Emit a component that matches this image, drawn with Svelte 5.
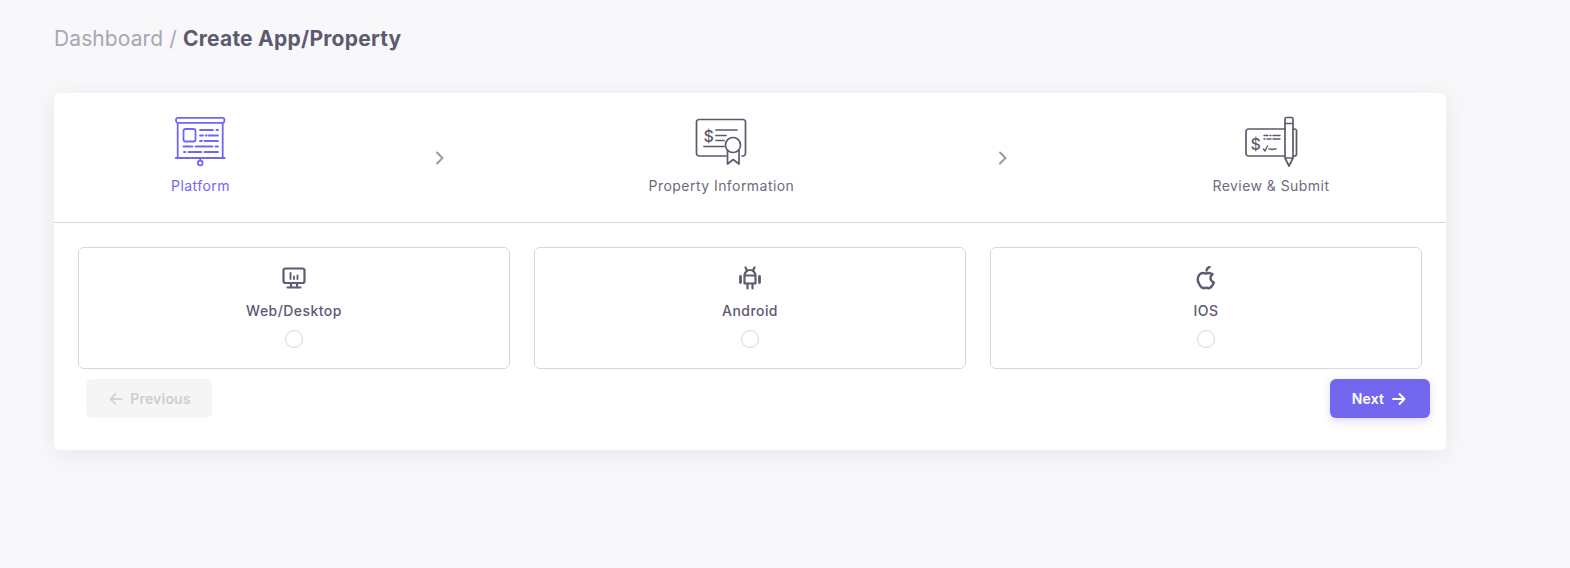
<script>
  const options = ['Web/Desktop', 'Android', 'IOS'];
</script>

<div class="page">
  <h1 class="crumb"><span class="muted">Dashboard /&nbsp;</span><strong>Create App/Property</strong></h1>

  <section class="card">
    <div class="steps">
      <div class="step active">
        <svg class="step-icon" viewBox="0 0 60 56" fill="none" stroke="currentColor" stroke-width="1.800" stroke-linecap="round">
          <rect x="5" y="5.800" width="48.400" height="5" rx="2"/>
          <path d="M6.700 11v35M51.700 11v35M4.700 46h49"/>
          <path d="M29.200 46v2.500"/>
          <circle cx="29.200" cy="51" r="2.400"/>
          <rect x="12.500" y="17" width="12" height="12.500" rx="2"/>
          <path d="M29 18h13M45.500 18h1.500M29 23.500h3M34.500 23.500h1M37.500 23.500h9.500M29 29h2M33.500 29h13.500M12.500 34.500h9M24.500 34.500h17M44.500 34.500h2.500M13 40h1.500M17.500 40h13M33.500 40h13.500"/>
        </svg>
        <span>Platform</span>
      </div>
      <svg class="chev" viewBox="0 0 16 16" fill="none" stroke="currentColor" stroke-width="2" stroke-linecap="round" stroke-linejoin="round"><path d="M5 2.500 10.500 8 5 13.500"/></svg>

      <div class="step">
        <svg class="step-icon" viewBox="0 0 60 56" fill="none" stroke="currentColor" stroke-width="1.700" stroke-linecap="round" stroke-linejoin="round">
          <path d="M35 44H8a2.500 2.500 0 0 1-2.500-2.500V10A2.500 2.500 0 0 1 8 7.500h44A2.500 2.500 0 0 1 54.500 10v31.500A2.500 2.500 0 0 1 52 44h-1"/>
          <path d="M25 18h21M25 23.500h10M25 28.500h8M13 34.500h20"/>
          <text x="12.500" y="29.500" font-size="16" font-weight="500" font-family="Inter, sans-serif" fill="currentColor" stroke="none">$</text>
          <circle cx="42" cy="33" r="7.500"/>
          <path d="M36.500 38.500V52l5.700-4.500 5.800 4.500V38.500"/>
        </svg>
        <span>Property Information</span>
      </div>
      <svg class="chev" viewBox="0 0 16 16" fill="none" stroke="currentColor" stroke-width="2" stroke-linecap="round" stroke-linejoin="round"><path d="M5 2.500 10.500 8 5 13.500"/></svg>

      <div class="step">
        <svg class="step-icon" viewBox="0 0 60 56" fill="none" stroke="currentColor" stroke-width="1.700" stroke-linecap="round" stroke-linejoin="round">
          <path d="M44 44H7.500A2.500 2.500 0 0 1 5 41.500v-22A2.500 2.500 0 0 1 7.500 17H44"/>
          <path d="M52 17h1.500A2 2 0 0 1 55.500 19v23A2 2 0 0 1 53.500 44H52"/>
          <path d="M44 7a1.500 1.500 0 0 1 1.500-1.500h5A1.500 1.500 0 0 1 52 7v39l-4 8-4-8zM44 11.500h8M44 46h8"/>
          <text x="9.500" y="37.500" font-size="16" font-weight="500" font-family="Inter, sans-serif" fill="currentColor" stroke="none">$</text>
          <path d="M23 23.500h4M29 23.500h1M32 23.500h7M23 27h1M26 27h4M32 27h7M22.500 37l1.500 2 2.500-5M28 37c1-1 2 .500 3 .500s2-1 4-.500" stroke-width="1.400"/>
        </svg>
        <span>Review &amp; Submit</span>
      </div>
    </div>

    <div class="options">
      {#each options as name, i}
        <div class="option">
          {#if i === 0}
            <svg class="opt-icon" viewBox="0 0 24 24" fill="none" stroke="currentColor" stroke-width="2.200" stroke-linecap="round" stroke-linejoin="round">
              <rect x="1.500" y="2.500" width="21" height="14.500" rx="2"/>
              <path d="M9 17v4M15 17v4M5.500 21.500h13"/>
              <path d="M8.500 7v6M12 10.500V13M15.500 9.500V13" stroke-width="1.900"/>
            </svg>
          {:else if i === 1}
            <svg class="opt-icon" viewBox="0 0 24 24" fill="none" stroke="currentColor" stroke-width="2.200" stroke-linecap="round" stroke-linejoin="round">
              <path d="M6.500 9.500a5.500 5.500 0 0 1 11 0v8h-11zM6.500 9.500h11"/>
              <path d="M7.500 1.500 9 4.500M16.500 1.500 15 4.500M9.500 17.500v5M14.500 17.500v5"/>
              <path d="M2.500 10.500v6M21.500 10.500v6" stroke-width="2.800"/>
            </svg>
          {:else}
            <svg class="opt-icon" viewBox="0 0 24 24" fill="none" stroke="currentColor" stroke-width="2.500" stroke-linecap="round" stroke-linejoin="round">
              <path d="M18.500 8.300C16.500 6.800 14 6.700 12 7.600 9.500 6.500 7 6.800 5.300 8.800 3.400 11.200 3.500 15 5.100 18c1.300 2.500 3 4.700 5.200 4 1.200-.500 2.200-.500 3.400 0 2.200 .700 4.200-1.500 5.500-4 .300-.500.500-1 .600-1.500-3.800-1.700-4.500-6-1.300-8.200z"/>
              <path d="M12.500 4.500c.300-1.800 1.300-3 3-3.500" stroke-width="2.400"/>
            </svg>
          {/if}
          <span class="opt-name">{name}</span>
          <span class="radio"></span>
        </div>
      {/each}
    </div>

    <div class="actions">
      <button class="btn prev" disabled>
        <svg viewBox="0 0 16 16" fill="none" stroke="currentColor" stroke-width="1.700" stroke-linecap="round" stroke-linejoin="round"><path d="M14 8H2.500M7.500 3 2.500 8l5 5"/></svg>
        Previous
      </button>
      <button class="btn next">
        Next
        <svg viewBox="0 0 16 16" fill="none" stroke="currentColor" stroke-width="1.900" stroke-linecap="round" stroke-linejoin="round"><path d="M2 8h11.500M8.500 3l5 5-5 5"/></svg>
      </button>
    </div>
  </section>
</div>

<style>
  :global(body) {
    margin: 0;
    background: #f8f8fb;
  }
  .page {
    box-sizing: border-box;
    height: 568px;
    padding: 24px 0 0 54px;
    font-family: Inter, "Liberation Sans", sans-serif;
    color: #5e5873;
    overflow: hidden;
  }
  .crumb {
    margin: 0 0 40px;
    font-size: 21px;
    line-height: 29px;
    font-weight: 400;
  }
  .muted { color: #a8a6b3; letter-spacing: 0.1px; }
  .crumb strong { font-weight: 700; color: #5c5a70; letter-spacing: 0.25px; }
  .card {
    width: 1392px;
    height: 357px;
    box-sizing: border-box;
    background: #fff;
    border-radius: 6px;
    box-shadow: 0 4px 24px rgba(34, 41, 47, 0.08);
  }
  .steps {
    display: flex;
    justify-content: space-around;
    align-items: flex-start;
    box-sizing: border-box;
    height: 130px;
    padding: 19px 16px 0;
    border-bottom: 1px solid #d8d6de;
  }
  .step {
    display: flex;
    flex-direction: column;
    align-items: center;
    font-size: 14px;
    line-height: 20px;
    letter-spacing: 0.45px;
    color: #6e6b7b;
  }
  .step.active { color: #7367f0; }
  .step-icon {
    width: 60px;
    height: 56px;
    margin-bottom: 8px;
  }
  .step.active .step-icon { color: #7367f0; }
  .step:not(.active) .step-icon { color: #5c5a6e; }
  .chev {
    width: 16px;
    height: 16px;
    margin-top: 38px;
    color: #9b99a6;
  }
  .options {
    display: grid;
    grid-template-columns: repeat(3, 432px);
    gap: 24px;
    padding: 24px 24px 0;
  }
  .option {
    box-sizing: border-box;
    height: 122px;
    padding-top: 18px;
    border: 1px solid #d8d6de;
    border-radius: 6px;
    display: flex;
    flex-direction: column;
    align-items: center;
  }
  .opt-icon {
    width: 24px;
    height: 24px;
    color: #5e5c71;
  }
  .opt-name {
    margin-top: 11px;
    font-size: 14px;
    line-height: 20px;
    font-weight: 500;
    letter-spacing: 0.45px;
  }
  .radio {
    box-sizing: border-box;
    width: 18px;
    height: 18px;
    margin-top: 9px;
    border: 1px solid #d8d6de;
    border-radius: 50%;
  }
  .actions {
    display: flex;
    justify-content: space-between;
    margin: 10px 16px 0 32px;
  }
  .btn {
    display: flex;
    align-items: center;
    justify-content: center;
    gap: 6px;
    height: 39px;
    border: none;
    border-radius: 6px;
    font: 600 14px Inter, sans-serif;
    letter-spacing: 0.2px;
    padding: 0;
  }
  .btn svg { width: 16px; height: 16px; }
  .prev {
    width: 126px;
    padding-left: 1px;
    background: #f5f5f6;
    color: #cdcdd2;
  }
  .next {
    width: 100px;
    gap: 7px;
    padding-right: 1px;
    background: #7367f0;
    color: #fff;
    box-shadow: 0 3px 8px rgba(115, 103, 240, 0.25);
  }
</style>
